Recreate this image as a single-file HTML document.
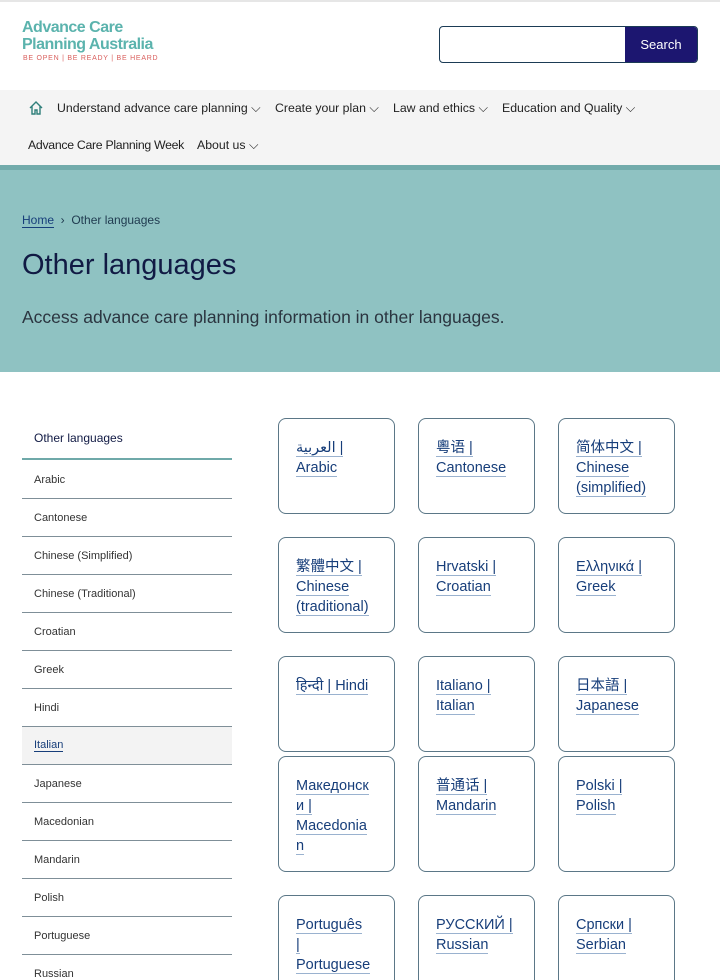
<!DOCTYPE html>
<html><head><meta charset="utf-8"><style>
*{margin:0;padding:0;box-sizing:border-box}
html,body{width:720px;height:980px;overflow:hidden}
body{font-family:"Liberation Sans","Noto Sans CJK SC",sans-serif;background:#fff;color:#222;position:relative}
.abs{position:absolute}
.logo1{left:22px;top:19px;color:#5bb3ad;font-size:16px;line-height:17px;font-weight:bold;letter-spacing:-0.5px}
.tag{left:23px;top:55px;color:#d9605e;font-size:7px;letter-spacing:.75px}
.search{left:439px;top:26px;width:259px;height:37px;border:1.5px solid #1b3b55;border-radius:4px;overflow:hidden}
.search .btn{position:absolute;right:0;top:0;bottom:0;width:72px;background:#1c1670;color:#fff;font-size:13px;display:flex;align-items:center;justify-content:center}
.nav{left:0;top:90px;width:720px;height:75px;background:#f4f4f4;font-size:12.3px;color:#222}
.nav span{position:absolute;white-space:nowrap}
.hero{left:0;top:165px;width:720px;height:207px;background:#8fc2c2;border-top:5px solid #72abab}
.card{position:absolute;width:117px;height:96px;border:1px solid #5b7787;border-radius:8px;padding:19px 14px 0 17px;font-size:14.5px;line-height:20px;color:#173e7a}
.card u{text-decoration:none;border-bottom:1px solid #9ab2cf}
.it{position:absolute;left:22px;width:210px;height:38px;border-bottom:1px solid #7f8f98;font-size:11px;color:#333;padding-left:12px;display:flex;align-items:center}
</style></head><body>
<div class="abs" style="left:0;top:0;width:720px;height:2px;background:#e6e6e6"></div>
<div class="abs logo1">Advance Care<br>Planning Australia</div>
<div class="abs tag">BE OPEN | BE READY | BE HEARD</div>
<div class="abs search"><div class="btn">Search</div></div>
<div class="abs nav">
<svg class="abs" style="left:28px;top:10px" width="16" height="16" viewBox="0 0 16 16" fill="none" stroke="#2f7f7a" stroke-width="1.4"><path d="M2 8L8 2l6 6M4 6.5V14h3v-4h2v4h3V6.5"/></svg>
<span style="left:57px;top:11px">Understand advance care planning ⌵</span>
<span style="left:275px;top:11px">Create your plan ⌵</span>
<span style="left:393px;top:11px">Law and ethics ⌵</span>
<span style="left:502px;top:11px">Education and Quality ⌵</span>
<span style="left:28px;top:48px;letter-spacing:-0.3px">Advance Care Planning Week</span>
<span style="left:197px;top:48px">About us ⌵</span>
</div>
<div class="abs hero">
<div class="abs" style="left:22px;top:43px;font-size:12px;color:#1f3a4f"><span style="color:#173e7a;border-bottom:1px solid #173e7a">Home</span> &nbsp;›&nbsp; Other languages</div>
<div class="abs" style="left:22px;top:79px;font-size:29px;color:#111a44">Other languages</div>
<div class="abs" style="left:22px;top:137px;font-size:17.5px;color:#2b3540">Access advance care planning information in other languages.</div>
</div>
<div class="abs" style="left:34px;top:431px;font-size:12px;color:#111a44">Other languages</div>
<div class="abs" style="left:22px;top:458px;width:210px;height:2px;background:#6fa9a9"></div>
<div class="it" style="top:461px">Arabic</div>
<div class="it" style="top:499px">Cantonese</div>
<div class="it" style="top:537px">Chinese (Simplified)</div>
<div class="it" style="top:575px">Chinese (Traditional)</div>
<div class="it" style="top:613px">Croatian</div>
<div class="it" style="top:651px">Greek</div>
<div class="it" style="top:689px">Hindi</div>
<div class="it" style="top:727px;background:#f3f3f3;color:#173e7a"><span style="border-bottom:1px solid #173e7a">Italian</span></div>
<div class="it" style="top:765px">Japanese</div>
<div class="it" style="top:803px">Macedonian</div>
<div class="it" style="top:841px">Mandarin</div>
<div class="it" style="top:879px">Polish</div>
<div class="it" style="top:917px">Portuguese</div>
<div class="it" style="top:955px">Russian</div>

<div class="card" style="left:278px;top:418px"><u>العربية |</u><br><u>Arabic</u></div>
<div class="card" style="left:418px;top:418px"><u>粵语 |</u><br><u>Cantonese</u></div>
<div class="card" style="left:558px;top:418px"><u>简体中文 |</u><br><u>Chinese</u><br><u>(simplified)</u></div>
<div class="card" style="left:278px;top:537px"><u>繁體中文 |</u><br><u>Chinese</u><br><u>(traditional)</u></div>
<div class="card" style="left:418px;top:537px"><u>Hrvatski |</u><br><u>Croatian</u></div>
<div class="card" style="left:558px;top:537px"><u>Ελληνικά |</u><br><u>Greek</u></div>
<div class="card" style="left:278px;top:656px"><u>हिन्दी | Hindi</u></div>
<div class="card" style="left:418px;top:656px"><u>Italiano |</u><br><u>Italian</u></div>
<div class="card" style="left:558px;top:656px"><u>日本語 |</u><br><u>Japanese</u></div>
<div class="card" style="left:278px;top:756px;height:116px"><u>Македонск</u><br><u>и |</u><br><u>Macedonia</u><br><u>n</u></div>
<div class="card" style="left:418px;top:756px;height:116px"><u>普通话 |</u><br><u>Mandarin</u></div>
<div class="card" style="left:558px;top:756px;height:116px"><u>Polski |</u><br><u>Polish</u></div>
<div class="card" style="left:278px;top:895px;height:120px"><u>Português</u><br><u>|</u><br><u>Portuguese</u></div>
<div class="card" style="left:418px;top:895px;height:120px"><u>РУССКИЙ |</u><br><u>Russian</u></div>
<div class="card" style="left:558px;top:895px;height:120px"><u>Српски |</u><br><u>Serbian</u></div>
</body></html>
